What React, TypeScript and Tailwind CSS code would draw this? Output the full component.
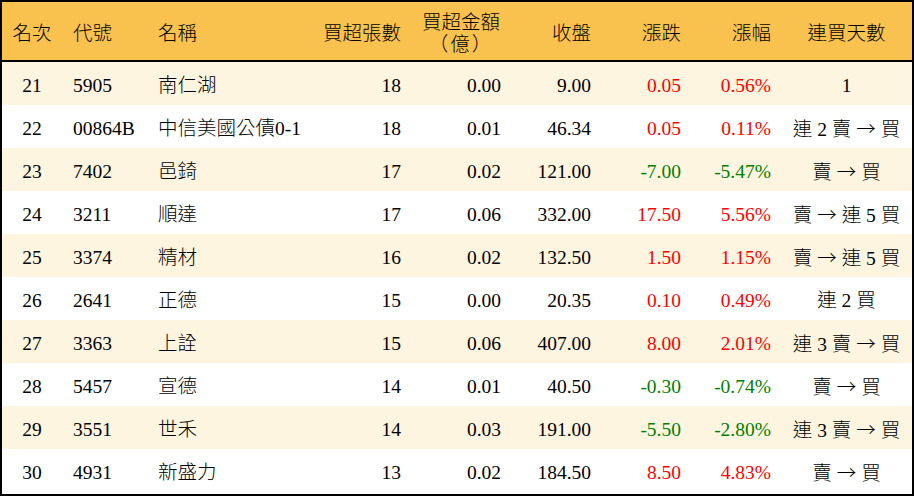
import React from "react";

type Row = {
  rank: string;
  code: string;
  name: string;
  qty: string;
  amt: string;
  close: string;
  chg: string;
  pct: string;
  days: string;
};

const rows: Row[] = [
  { rank: "21", code: "5905", name: "南仁湖", qty: "18", amt: "0.00", close: "9.00", chg: "0.05", pct: "0.56%", days: "1" },
  { rank: "22", code: "00864B", name: "中信美國公債0-1", qty: "18", amt: "0.01", close: "46.34", chg: "0.05", pct: "0.11%", days: "連 2 賣 → 買" },
  { rank: "23", code: "7402", name: "邑錡", qty: "17", amt: "0.02", close: "121.00", chg: "-7.00", pct: "-5.47%", days: "賣 → 買" },
  { rank: "24", code: "3211", name: "順達", qty: "17", amt: "0.06", close: "332.00", chg: "17.50", pct: "5.56%", days: "賣 → 連 5 買" },
  { rank: "25", code: "3374", name: "精材", qty: "16", amt: "0.02", close: "132.50", chg: "1.50", pct: "1.15%", days: "賣 → 連 5 買" },
  { rank: "26", code: "2641", name: "正德", qty: "15", amt: "0.00", close: "20.35", chg: "0.10", pct: "0.49%", days: "連 2 買" },
  { rank: "27", code: "3363", name: "上詮", qty: "15", amt: "0.06", close: "407.00", chg: "8.00", pct: "2.01%", days: "連 3 賣 → 買" },
  { rank: "28", code: "5457", name: "宣德", qty: "14", amt: "0.01", close: "40.50", chg: "-0.30", pct: "-0.74%", days: "賣 → 買" },
  { rank: "29", code: "3551", name: "世禾", qty: "14", amt: "0.03", close: "191.00", chg: "-5.50", pct: "-2.80%", days: "連 3 賣 → 買" },
  { rank: "30", code: "4931", name: "新盛力", qty: "13", amt: "0.02", close: "184.50", chg: "8.50", pct: "4.83%", days: "賣 → 買" },
];

const grid = "grid grid-cols-[60px_85px_163px_101px_100px_90px_90px_90px_131px]";

function Days({ text }: { text: string }) {
  const parts = text.split("→");
  return (
    <>
      {parts.map((p, i) => (
        <React.Fragment key={i}>
          {i > 0 && <span className="font-light" style={{ fontFamily: '"Noto Sans CJK TC", sans-serif' }}>→</span>}
          {p}
        </React.Fragment>
      ))}
    </>
  );
}

export default function App() {
  return (
    <div
      className="w-[914px] h-[496px] border-2 border-black bg-white text-black text-[19.5px] leading-none font-light overflow-hidden"
      style={{ fontFamily: '"Liberation Serif", "Noto Sans CJK TC", serif' }}
    >
      <div className={`${grid} h-[60px] pt-[6px] bg-[#f9c24f] border-b-2 border-black items-center`}>
        <div className="text-center">名次</div>
        <div className="pl-[11px]">代號</div>
        <div className="pl-[11px]">名稱</div>
        <div className="text-right pr-[10px]">買超張數</div>
        <div className="text-center leading-[22px]">
          <div>買超金額</div>
          <div className="tracking-[2px]">（億）</div>
        </div>
        <div className="text-right pr-[10px]">收盤</div>
        <div className="text-right pr-[10px]">漲跌</div>
        <div className="text-right pr-[10px]">漲幅</div>
        <div className="text-center">連買天數</div>
      </div>
      {rows.map((r, i) => {
        const neg = r.chg.startsWith("-");
        const color = neg ? "text-[#008000]" : "text-[#ff0000]";
        return (
          <div
            key={r.rank}
            className={`${grid} h-[43px] pt-[4px] items-center ${i % 2 === 0 ? "bg-[#fdf5e0]" : "bg-white"}`}
          >
            <div className="text-center">{r.rank}</div>
            <div className="pl-[11px]">{r.code}</div>
            <div className="pl-[11px] whitespace-nowrap">{r.name}</div>
            <div className="text-right pr-[10px]">{r.qty}</div>
            <div className="text-right pr-[10px]">{r.amt}</div>
            <div className="text-right pr-[10px]">{r.close}</div>
            <div className={`text-right pr-[10px] ${color}`}>{r.chg}</div>
            <div className={`text-right pr-[10px] ${color}`}>{r.pct}</div>
            <div className="text-center whitespace-nowrap">
              <Days text={r.days} />
            </div>
          </div>
        );
      })}
    </div>
  );
}
